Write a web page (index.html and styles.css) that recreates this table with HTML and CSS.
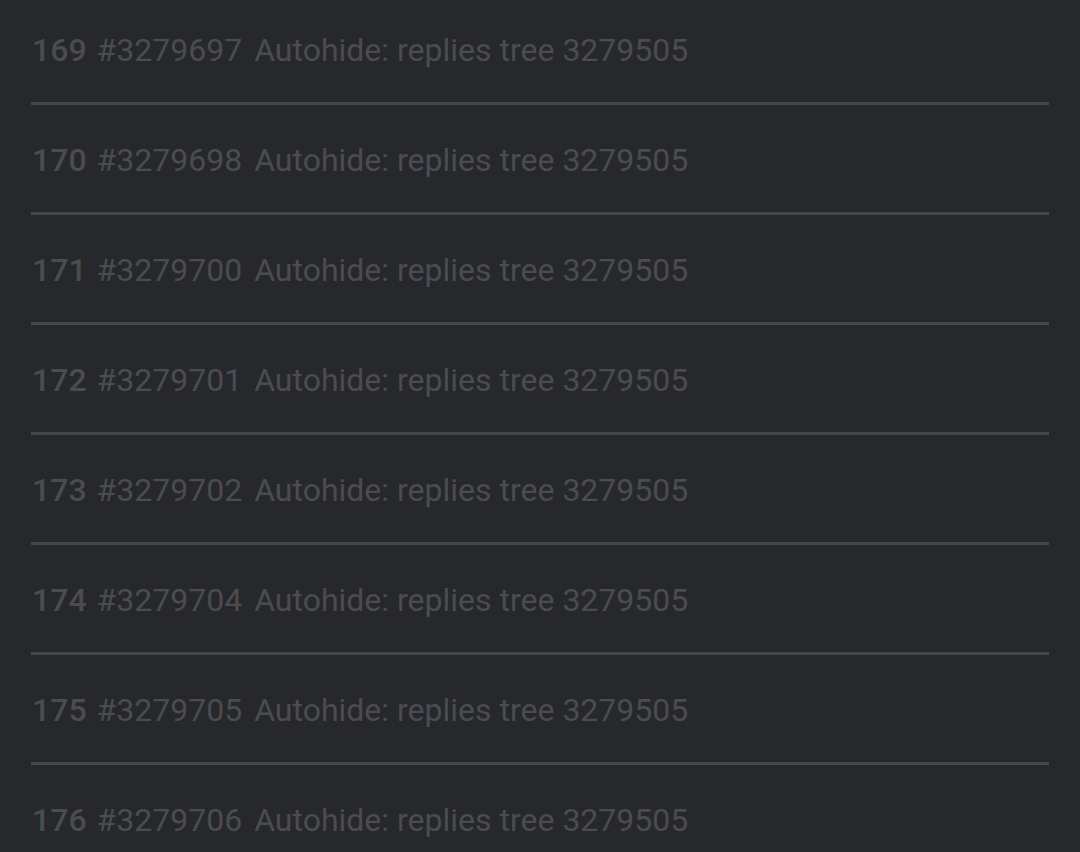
FILE: index.html
```html
<!DOCTYPE html>
<html lang="en">
<head>
  <meta charset="UTF-8">
  <title>Autohide log</title>
  <link rel="stylesheet" href="styles.css">
</head>
<body>
  <ul class="log">
    <li class="row"><b>169</b><span class="id">#3279697</span><span>Autohide: replies tree 3279505</span></li>
    <li class="row"><b>170</b><span class="id">#3279698</span><span>Autohide: replies tree 3279505</span></li>
    <li class="row"><b>171</b><span class="id">#3279700</span><span>Autohide: replies tree 3279505</span></li>
    <li class="row"><b>172</b><span class="id">#3279701</span><span>Autohide: replies tree 3279505</span></li>
    <li class="row"><b>173</b><span class="id">#3279702</span><span>Autohide: replies tree 3279505</span></li>
    <li class="row"><b>174</b><span class="id">#3279704</span><span>Autohide: replies tree 3279505</span></li>
    <li class="row"><b>175</b><span class="id">#3279705</span><span>Autohide: replies tree 3279505</span></li>
    <li class="row"><b>176</b><span class="id">#3279706</span><span>Autohide: replies tree 3279505</span></li>
  </ul>
</body>
</html>
```

FILE: styles.css
```css
html, body { margin: 0; height: 100%; overflow: hidden; background: #27282c; }
body { font-family: Roboto, "Liberation Sans", sans-serif; }
.log { list-style: none; margin: -5px 31px 0; padding: 0; }
.row {
  display: flex;
  align-items: center;
  gap: 12px;
  padding: 2px 0 0 1px;
  box-sizing: border-box;
  height: 110px;
  border-bottom: 3px solid #46474b;
  font-size: 32px;
  color: #4b4c50;
  white-space: pre;
}
.row b { font-weight: 500; }
.row .id { margin-left: -2px; }
```
